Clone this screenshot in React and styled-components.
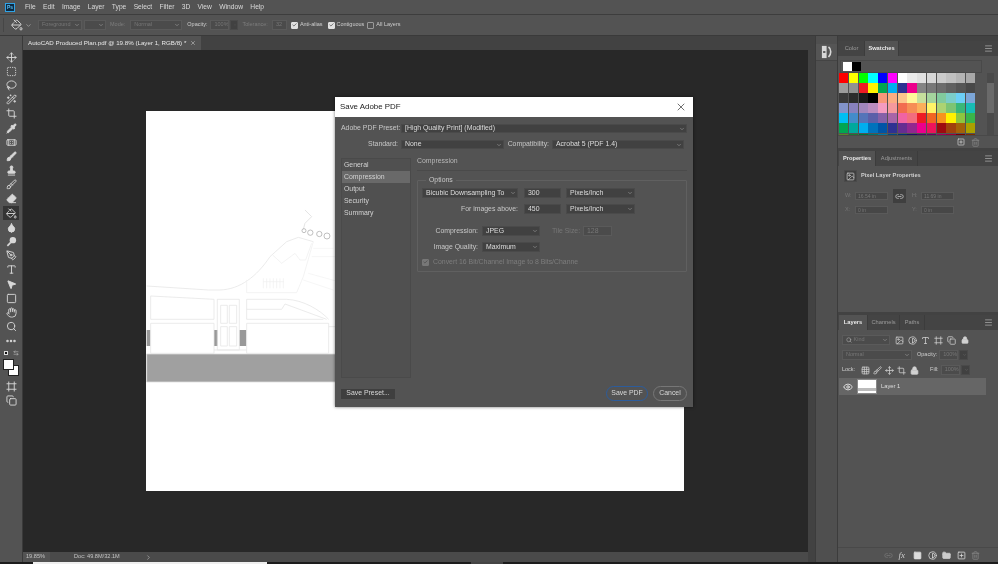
import React from 'react';
import styled, { createGlobalStyle } from 'styled-components';
import {
  Move, SquareDashed, Lasso, WandSparkles, Crop, Pipette, Bandage, Brush, Stamp, Eraser, PaintBucket,
  Droplet, PenTool, Type, MousePointer2, Square, Hand, Search, Ellipsis, Image, Lock,
  Link2, Trash2, FolderClosed, SquarePlus, Eye, Contrast, Grid3x3, Menu, ChevronDown, ChevronRight, X, Check, Frame, Copy, ArrowLeftRight,
} from 'lucide-react';

const Global = createGlobalStyle`
  html, body { margin: 0; padding: 0; background: #424242; overflow: hidden; }
  * { box-sizing: border-box; }
  #root { width: 998px; height: 564px; }
`;

const Page = styled.div`
  width: 998px; height: 564px; display: flex; flex-direction: column; background: #424242;
  font-family: "Liberation Sans", Arial, sans-serif; font-size: 6.9px; color: #cfcfcf; line-height: 1; overflow: hidden;
  filter: blur(0.3px);
`;
const MenuBar = styled.div`
  height: 15px; flex: none; background: #535353; display: flex; align-items: center; padding-left: 5px;
  border-bottom: 1px solid #3d3d3d;
`;
const Logo = styled.div`
  width: 10px; height: 9px; background: #0d2a42; border: 1px solid #2fa3e6; color: #5cc0f5; font-size: 5px; font-weight: 700;
  display: flex; align-items: center; justify-content: center; margin-right: 10px;
`;
const MenuItem = styled.span`
  color: #dadada; font-size: 6.7px; margin-right: 7.3px;
`;
const OptionsBar = styled.div`
  height: 21px; flex: none; background: #535353; display: flex; align-items: center; padding-left: 3px;
  border-bottom: 1px solid #3a3a3a; font-size: 5.5px;
`;
const Grip = styled.div`width: 1px; height: 14px; background: #464646; margin-right: 7px;`;
const Spaced = styled.div`
  display: flex; align-items: center; flex: none; margin-left: ${p => p.$ml || 0}px;
  color: ${p => p.$muted ? '#7d7d7d' : '#cfcfcf'};
`;
const Field = styled.div`
  flex: none; width: ${p => p.$w}px; height: ${p => p.$h || 10}px; margin-left: ${p => p.$ml || 0}px;
  background: ${p => p.$dim ? '#4b4b4b' : '#414141'}; border: 1px solid ${p => p.$dim ? '#5a5a5a' : '#4a4a4a'};
  color: ${p => p.$dim ? '#777' : '#dedede'}; display: flex; align-items: center; justify-content: space-between; padding: 0 1px 0 3px;
  white-space: nowrap; overflow: hidden;
`;
const Tick = styled.div`
  width: 7px; height: 7px; flex: none; border-radius: 1px; margin-left: ${p => p.$ml || 0}px;
  background: ${p => p.$on ? '#e0e0e0' : 'transparent'}; border: 1px solid ${p => p.$on ? '#e0e0e0' : '#9a9a9a'};
  display: flex; align-items: center; justify-content: center;
  ${p => p.$dim && 'background:#777;border-color:#777;'}
`;
const Workspace = styled.div`flex: 1; min-height: 0; display: flex;`;
const Tools = styled.div`
  width: 23px; flex: none; background: #535353; border-right: 1px solid #3a3a3a; padding-top: 14px;
  display: flex; flex-direction: column; align-items: center; position: relative;
`;
const Tool = styled.div`
  width: 16px; height: 14.2px; flex: none; display: flex; align-items: center; justify-content: center; color: #d8d8d8;
  background: ${p => p.$active ? '#343434' : 'transparent'};
`;
const ColorPair = styled.div`
  width: 16px; height: 29px; flex: none; margin-top: 2px; position: relative;
`;
const Chip = styled.div`
  position: absolute; background: #fff; border: 1px solid #222; width: 11px; height: 11px;
  left: ${p => p.$x}px; top: ${p => p.$y}px;
`;
const MiniChip = styled.div`
  position: absolute; left: 1px; top: 1px; width: 4px; height: 4px; background: #111; border: 1px solid #ddd;
`;
const Swap = styled.div`position: absolute; left: 10px; top: 0; color: #ccc; display: flex;`;
const Centre = styled.div`flex: 1; min-width: 0; display: flex; flex-direction: column;`;
const TabBar = styled.div`height: 14px; flex: none; background: #424242; display: flex;`;
const DocTab = styled.div`
  width: 178px; background: #535353; display: flex; align-items: center; justify-content: space-between;
  padding: 0 5px; color: #e8e8e8; font-size: 6.2px; white-space: nowrap; font-weight: 400;
`;
const Canvas = styled.div`
  flex: 1; min-height: 0; background: #282828; position: relative; display: flex; align-items: center; justify-content: center;
`;
const Doc = styled.div`width: 538px; height: 380px; background: #fff; flex: none; margin-right: 2px;`;
const DocDrawing = styled.svg`display: block; width: 538px; height: 380px;`;
const Status = styled.div`
  height: 10px; flex: none; background: #4a4a4a; display: flex; align-items: center; color: #c4c4c4; font-size: 5.6px;
`;
const StatusCell = styled.div`
  height: 100%; width: ${p => p.$w}px; flex: none; display: flex; align-items: center; padding-left: ${p => p.$pl}px; background: ${p => p.$bg || 'transparent'};
`;
const Bottom = styled.div`height: 2px; flex: none; background: #1c1c1c; display: flex; padding-left: 33px;`;
const BottomPiece = styled.div`width: ${p => p.$w}px; margin-right: ${p => p.$mr || 0}px; background: ${p => p.$c};`;

const Gutter = styled.div`width: 7px; flex: none; background: #424242;`;
const IconStrip = styled.div`
  width: 23px; flex: none; background: #4f4f4f; border-left: 1px solid #3c3c3c; border-right: 1px solid #3c3c3c; padding-top: 8px;
`;
const StripBox = styled.div`
  height: 17px; background: #555; display: flex; align-items: center; justify-content: center; color: #d8d8d8; border-bottom: 1px solid #444;
`;
const Right = styled.div`
  width: 160px; flex: none; display: flex; flex-direction: column; padding-top: 5px; gap: 3px; background: #424242;
`;
const Panel = styled.div`
  height: ${p => p.$h ? `${p.$h}px` : 'auto'}; flex: ${p => p.$h ? 'none' : 1}; background: #535353; display: flex; flex-direction: column; min-height: 0;
`;
const Tabs = styled.div`height: 15px; flex: none; background: #444; display: flex; align-items: stretch; padding-left: 1px; position: relative;`;
const PanelTab = styled.div`
  width: ${p => p.$w}px; display: flex; align-items: center; justify-content: center; font-size: 5.7px;
  background: ${p => p.$on ? '#535353' : 'transparent'}; color: ${p => p.$on ? '#e8e8e8' : '#9c9c9c'}; font-weight: ${p => p.$on ? 700 : 400};
  border-right: 1px solid #3c3c3c;
`;
const PanelMenu = styled.div`position: absolute; right: 5px; top: 3px; color: #aaa; display: flex;`;
const SwatchHead = styled.div`
  height: 13px; margin: 4px 16px 0 2px; flex: none; border: 1px solid #494949; display: flex; align-items: center; padding-left: 2px;
`;
const Solid = styled.div`width: 9px; height: 9px; background: ${p => p.$c};`;
const SwatchWrap = styled.div`display: flex; padding-left: 1px; height: 62px; flex: none;`;
const SwatchGrid = styled.div`
  width: 137px; height: 62px; overflow: hidden; display: grid; grid-template-columns: repeat(14, 9.78px); grid-auto-rows: 10.1px; flex: none;
`;
const Swatch = styled.div`background: ${p => p.$c}; margin: 0 .5px .5px 0;`;
const Scroll = styled.div`
  width: 7px; margin-left: 11px; background: #4a4a4a; padding: 10px 0 0; flex: none;
`;
const Thumb = styled.div`height: 30px; background: #6a6a6a;`;
const PanelFoot = styled.div`
  height: 13px; flex: none; display: flex; align-items: center; justify-content: flex-end; gap: 6px; padding-right: 18px; color: #bdbdbd; border-top: 1px solid #494949;
`;
const PropHead = styled.div`display: flex; align-items: center; gap: 4px; padding: 4px 0 0 6px; color: #cfcfcf; font-weight: 700; font-size: 5.7px;`;
const PropIcon = styled.div`width: 13px; height: 12px; background: #3f3f3f; border: 1px solid #4a4a4a; display: flex; align-items: center; justify-content: center; color: #ccc;`;
const PropGrid = styled.div`
  display: grid; grid-template-columns: 10px 33px 5px 13px 6px 9px 33px; grid-auto-rows: 8px; row-gap: 6px; align-items: center; padding: 10px 0 0 7px; color: #777; font-size: 5.5px;
`;
const PropInput = styled.div`height: 8px; background: #474747; border: 1px solid #5a5a5a; padding-left: 2px; color: #777; display: flex; align-items: center; font-size: 5px;`;
const LinkBtn = styled.div`
  height: 14px; background: #3f3f3f; display: flex; align-items: center; justify-content: center; color: #c8c8c8;
`;
const Row = styled.div`
  display: flex; align-items: center; flex: none; height: ${p => p.$h || 10}px; margin-top: ${p => p.$mt || 0}px; padding-left: ${p => p.$pl || 0}px;
`;
const LayerControls = styled.div`font-size: 5.5px;`;
const IconSlot = styled.div`
  width: ${p => p.$w}px; flex: none; display: flex; justify-content: center; color: #d2d2d2;
`;
const LayerRow = styled.div`
  height: 17px; width: 147px; flex: none; background: #666; margin: 3px 0 0 1px; display: flex; align-items: center; padding-left: 4px; color: #dedede; font-size: 5.8px; position: relative;
`;
const LayerThumb = styled.div`
  width: 20px; height: 15px; background: #fff; margin-left: 4px; margin-right: 4px; border: 1px solid #888; display: flex; align-items: flex-end;
`;
const LayerBand = styled.div`height: 3px; width: 100%; background: #bbb; margin-bottom: 2px;`;
const Spacer = styled.div`flex: 1;`;
const LayerFoot = styled(PanelFoot)`height: 15px; gap: 5.5px; padding-right: 18px; color: #a8a8a8;`;
const Fx = styled.span`display: inline-block; width: 9px; font-style: italic; font-family: "Liberation Serif", serif; font-size: 9px; color: #ccc;`;

const Dialog = styled.div`
  position: absolute; left: 312px; top: 47px; width: 358px; height: 310px; background: #535353;
  display: flex; flex-direction: column; box-shadow: 0 0 3px rgba(0,0,0,.55); color: #c8c8c8;
`;
const TitleBar = styled.div`
  height: 20px; flex: none; background: #fff; color: #222; font-size: 7.9px; display: flex; align-items: center; justify-content: space-between; padding: 0 6px 0 5px;
`;
const DialogBody = styled.div`flex: 1; display: flex; flex-direction: column; padding: 7px 6px 5px;`;
const RightLabel = styled.div`
  flex: none; width: ${p => p.$w}px; margin-left: ${p => p.$ml || 0}px; text-align: right; white-space: nowrap; color: ${p => p.$dim ? '#777' : '#c8c8c8'}; margin-right: ${p => p.$mr ?? 3}px;
`;
const Main = styled.div`display: flex; gap: 6px; margin-top: 9px; height: 220px; flex: none;`;
const Sidebar = styled.div`width: 70px; flex: none; border: 1px solid #4a4a4a; background: #505050;`;
const SideItem = styled.div`
  height: 12px; display: flex; align-items: center; padding-left: 2px;
  background: ${p => p.$on ? '#696969' : 'transparent'}; color: #d2d2d2;
`;
const Content = styled.div`flex: 1; min-width: 0;`;
const SectionHead = styled.div`height: 13px; border-bottom: 1px solid #4a4a4a; color: #b8b8b8;`;
const Group = styled.div`
  position: relative; height: 92px; margin-top: 9px; border: 1px solid #606060; border-radius: 1px; padding: 7px 0 0 4px;
`;
const Legend = styled.div`
  position: absolute; left: 8px; top: -4px; background: #535353; padding: 0 3px; color: #c8c8c8;
`;
const Check2 = styled.div`display: flex; align-items: center; gap: 4px; color: #7d7d7d; margin-top: 6px; height: 8px;`;
const Footer = styled.div`flex: 1; display: flex; align-items: center; gap: 5px; padding: 6px 0 0 0;`;
const PresetBtn = styled.div`
  width: 54px; height: 10px; background: #3f3f3f; color: #d8d8d8; display: flex; align-items: center; justify-content: center; margin-right: auto; margin-top: 1px;
`;
const RoundBtn = styled.div`
  width: ${p => p.$w}px; height: 15px; border-radius: 8px; border: 1px solid ${p => p.$primary ? '#2c5c9c' : '#777'}; color: #d8d8d8;
  display: flex; align-items: center; justify-content: center;
`;
const Caret = () => <ChevronDown size={6} strokeWidth={2} color="#a8a8a8" />;
const Sel = ({ w, ml, dim, children }) => (
  <Field $w={w} $ml={ml} $dim={dim}><span>{children}</span><Caret /></Field>
);

const Dodge = ({ size }) => (
  <svg width={size} height={size} viewBox="0 0 12 12">
    <circle cx="7.5" cy="4.5" r="3.5" fill="currentColor" />
    <path d="M5.2 7L1.5 10.8" stroke="currentColor" strokeWidth="1.8" fill="none" />
  </svg>
);
const CloneIcon = () => (
  <svg width="12" height="14" viewBox="0 0 12 14" fill="none" stroke="currentColor" strokeWidth="1.2">
    <rect x="1.5" y="1.5" width="3.5" height="3" fill="currentColor" />
    <rect x="1.5" y="5.5" width="3.5" height="3" />
    <rect x="1.5" y="9.5" width="3.5" height="3" fill="currentColor" />
    <path d="M7.5 2C10.5 4 10.5 9 7.5 12" strokeWidth="1.6" />
  </svg>
);

const menus = ['File', 'Edit', 'Image', 'Layer', 'Type', 'Select', 'Filter', '3D', 'View', 'Window', 'Help'];
const toolIcons = [
  [Move], [SquareDashed], [Lasso], [WandSparkles], [Crop], [Pipette, 1], [Bandage], [Brush, 1], [Stamp, 1], [Brush], [Eraser, 1], [PaintBucket],
  [Droplet, 1], [Dodge], [PenTool], [Type], [MousePointer2, 1], [Square], [Hand], [Search], [Ellipsis],
];
const swatches = [
  '#ff0000','#ffff00','#00ff00','#00ffff','#0000ff','#ff00ff','#ffffff','#ebebeb','#e1e1e1','#d7d7d7','#cbcbcb','#c0c0c0','#b4b4b4','#a8a8a8',
  '#9c9c9c','#919191','#ed1c24','#fff200','#00a651','#00aeef','#2e3192','#ec008c','#848484','#787878','#6c6c6c','#606060','#555555','#484848',
  '#3a3a3a','#2c2c2c','#1a1a1a','#000000','#f7977a','#fbad82','#fdc68c','#fff799','#c6df9c','#a4d49d','#81ca9d','#7bcdc9','#6ccff7','#7ca6d8',
  '#8293ca','#8881be','#a286bd','#bc8cbf','#f49bc1','#f5999d','#f26c4f','#f68e55','#fbaf5a','#fff467','#acd372','#7dc473','#39b778','#17bcb4',
  '#00bff3','#438cca','#5574b9','#5c5fa9','#8560a8','#a864a8','#f063a4','#f26d7e','#ed1c24','#f26522','#f7941d','#fff200','#8dc63f','#39b54a',
  '#00a651','#00a99d','#00aeef','#0072bc','#0054a6','#2e3192','#662d91','#92278f','#ec008c','#ed145b','#9e0b0f','#a0410d','#a36209','#aba000',
  '#598527','#1a7b30','#007236','#00746b','#0076a3','#004b80','#003471','#1b1464','#440e62','#630460','#9e005d','#9e0039','#790000','#7a2e00',
];

const PlanDrawing = () => (
  <DocDrawing viewBox="0 0 538 380">
    <g transform="translate(-6 99) scale(.3333)" fill="none" stroke="#e6e6e6" strokeWidth="2.4">
      <path fill="#a0a0a0" stroke="#dcdcdc" d="M20 432H620V516H20z" />
      <path fill="#999" stroke="none" d="M20 360h11v48H20zM222 360h11v48h-11zM298 360h21v48h-21z" />
      <path d="M32 258L222 268V328H32z" />
      <path d="M32 340H222V430H32z" />
      <path d="M232 268H298V420H232z" />
      <path d="M242 286h20v54h-20zM268 286h22v54h-22zM242 350h20v58h-20zM268 350h22v58h-22z" />
      <path d="M222 420h98M320 340H566V430H320zM566 350h40" />
      <path d="M320 268V328H550M320 298H425L435 282L560 328" />
      <path d="M320 268H440C490 270 540 300 566 328" />
      <path d="M20 228L205 240H240C300 238 350 200 390 140L440 95L475 82L520 95" />
      <path stroke="#f0f0f0" d="M320 210V248H470L490 200L520 95M398 135L425 160L465 130L480 150H497L515 100" />
      <path stroke="#eee" d="M370 205v30M380 205v30M390 205v30M400 205v30M410 205v30M420 205v30M430 205v30M370 215h62" strokeWidth="2" />
      <path stroke="#ddd" d="M495 0L515 20L495 40L490 58" />
      <path stroke="#b0b0b0" d="M486 62a6 6 0 1 1 12 0a6 6 0 1 1-12 0M503 68a8 8 0 1 1 16 0a8 8 0 1 1-16 0M530 72a8 8 0 1 1 16 0a8 8 0 1 1-16 0M552 78a9 9 0 1 1 18 0a9 9 0 1 1-18 0" />
      <path stroke="#f4f4f4" d="M520 115h60M515 140h70M505 190l80 22M490 210l90 30" />
    </g>
  </DocDrawing>
);

export default function App() {
  return (
    <Page>
      <Global />
      <MenuBar>
        <Logo>Ps</Logo>
        {menus.map(m => <MenuItem key={m}>{m}</MenuItem>)}
      </MenuBar>
      <OptionsBar>
        <Grip />
        <PaintBucket size={12} color="#dcdcdc" strokeWidth={1.8} />
        <Spaced $ml={2}><ChevronDown size={7} color="#bbb" /></Spaced>
        <Sel w={44} ml={6} dim>Foreground</Sel>
        <Sel w={22} ml={2} dim />
        <Spaced $ml={4} $muted>Mode:</Spaced>
        <Sel w={52} ml={5} dim>Normal</Sel>
        <Spaced $ml={5}>Opacity:</Spaced>
        <Field $w={19} $ml={3} $dim>100%</Field>
        <Field $w={8} $ml={1}><Caret /></Field>
        <Spaced $ml={4} $muted>Tolerance:</Spaced>
        <Field $w={15} $ml={4} $dim>32</Field>
        <Tick $ml={4} $on><Check size={6} color="#333" strokeWidth={3} /></Tick>
        <Spaced $ml={2}>Anti-alias</Spaced>
        <Tick $ml={5} $on><Check size={6} color="#333" strokeWidth={3} /></Tick>
        <Spaced $ml={2}>Contiguous</Spaced>
        <Tick $ml={3} />
        <Spaced $ml={2}>All Layers</Spaced>
      </OptionsBar>
      <Workspace>
        <Tools>
          {toolIcons.map(([I, filled], i) => (
            <Tool key={i} $active={i === 11}>
              <I size={i === 20 ? 12 : 11} strokeWidth={i === 20 ? 3 : 2} fill={filled ? 'currentColor' : 'none'} />
            </Tool>
          ))}
          <ColorPair>
            <MiniChip />
            <Swap><ArrowLeftRight size={6} strokeWidth={2} /></Swap>
            <Chip $x={5} $y={15} />
            <Chip $x={0} $y={9} />
          </ColorPair>
          <Tool><Frame size={11} strokeWidth={2} /></Tool>
          <Tool><Copy size={11} strokeWidth={2} /></Tool>
        </Tools>
        <Centre>
          <TabBar>
            <DocTab>
              <span>AutoCAD Produced Plan.pdf @ 19.8% (Layer 1, RGB/8) *</span>
              <X size={6} color="#bbb" strokeWidth={2.5} />
            </DocTab>
          </TabBar>
          <Canvas>
            <Doc><PlanDrawing /></Doc>
            <Dialog>
              <TitleBar>
                <span>Save Adobe PDF</span>
                <X size={12} color="#222" strokeWidth={1.3} />
              </TitleBar>
              <DialogBody>
                <Row $h={9}>
                  <RightLabel $w={57}>Adobe PDF Preset:</RightLabel>
                  <Field $w={286} $h={9}><span>[High Quality Print] (Modified)</span><Caret /></Field>
                </Row>
                <Row $h={9} $mt={7}>
                  <RightLabel $w={57}>Standard:</RightLabel>
                  <Field $w={103} $h={9}><span>None</span><Caret /></Field>
                  <RightLabel $w={45}>Compatibility:</RightLabel>
                  <Field $w={132} $h={9}><span>Acrobat 5 (PDF 1.4)</span><Caret /></Field>
                </Row>
                <Main>
                  <Sidebar>
                    <SideItem>General</SideItem>
                    <SideItem $on>Compression</SideItem>
                    <SideItem>Output</SideItem>
                    <SideItem>Security</SideItem>
                    <SideItem>Summary</SideItem>
                  </Sidebar>
                  <Content>
                    <SectionHead>Compression</SectionHead>
                    <Group>
                      <Legend>Options</Legend>
                      <Row>
                        <Sel w={96}>Bicubic Downsampling To</Sel>
                        <Field $w={37} $ml={6}>300</Field>
                        <Sel w={69} ml={5}>Pixels/Inch</Sel>
                      </Row>
                      <Row $mt={6}>
                        <RightLabel $w={96} $mr={0}>For images above:</RightLabel>
                        <Field $w={37} $ml={6}>450</Field>
                        <Sel w={69} ml={5}>Pixels/Inch</Sel>
                      </Row>
                      <Row $mt={12}>
                        <RightLabel $w={56} $mr={4}>Compression:</RightLabel>
                        <Sel w={58}>JPEG</Sel>
                        <RightLabel $w={28} $ml={12} $dim>Tile Size:</RightLabel>
                        <Field $w={29} $dim>128</Field>
                      </Row>
                      <Row $mt={6}>
                        <RightLabel $w={56} $mr={4}>Image Quality:</RightLabel>
                        <Sel w={58}>Maximum</Sel>
                      </Row>
                      <Check2>
                        <Tick $dim><Check size={6} color="#444" strokeWidth={3} /></Tick>
                        <span>Convert 16 Bit/Channel Image to 8 Bits/Channe</span>
                      </Check2>
                    </Group>
                  </Content>
                </Main>
                <Footer>
                  <PresetBtn>Save Preset...</PresetBtn>
                  <RoundBtn $w={42} $primary>Save PDF</RoundBtn>
                  <RoundBtn $w={34}>Cancel</RoundBtn>
                </Footer>
              </DialogBody>
            </Dialog>
          </Canvas>
          <Status>
            <StatusCell $w={3} $pl={0} $bg="#535353" />
            <StatusCell $w={24} $pl={0} $bg="#535353">19.85%</StatusCell>
            <StatusCell $w={95} $pl={24}>Doc: 49.8M/32.1M</StatusCell>
            <ChevronRight size={7} color="#bbb" />
          </Status>
        </Centre>
        <Gutter />
        <IconStrip>
          <StripBox><CloneIcon /></StripBox>
        </IconStrip>
        <Right>
          <Panel $h={107}>
            <Tabs>
              <PanelTab $w={26}>Color</PanelTab>
              <PanelTab $w={34} $on>Swatches</PanelTab>
              <PanelMenu><Menu size={9} /></PanelMenu>
            </Tabs>
            <SwatchHead><Solid $c="#fff" /><Solid $c="#000" /></SwatchHead>
            <SwatchWrap>
              <SwatchGrid>
                {swatches.map((c, i) => <Swatch key={i} $c={c} />)}
              </SwatchGrid>
              <Scroll><Thumb /></Scroll>
            </SwatchWrap>
            <PanelFoot>
              <SquarePlus size={8} color="#ddd" />
              <Trash2 size={9} color="#888" />
            </PanelFoot>
          </Panel>
          <Panel $h={161}>
            <Tabs>
              <PanelTab $w={37} $on>Properties</PanelTab>
              <PanelTab $w={42}>Adjustments</PanelTab>
              <PanelMenu><Menu size={9} /></PanelMenu>
            </Tabs>
            <PropHead><PropIcon><Image size={9} /></PropIcon>Pixel Layer Properties</PropHead>
            <PropGrid>
              <span>W:</span><PropInput>16.54 in</PropInput><span /><LinkBtn><Link2 size={9} /></LinkBtn><span /><span>H:</span><PropInput>11.69 in</PropInput>
              <span>X:</span><PropInput>0 in</PropInput><span /><span /><span /><span>Y:</span><PropInput>0 in</PropInput>
            </PropGrid>
          </Panel>
          <Panel>
            <Tabs>
              <PanelTab $w={29} $on>Layers</PanelTab>
              <PanelTab $w={32}>Channels</PanelTab>
              <PanelTab $w={25}>Paths</PanelTab>
              <PanelMenu><Menu size={9} /></PanelMenu>
            </Tabs>
            <LayerControls>
              <Row $mt={5} $pl={4}>
                <Field $w={48} $dim><Search size={6} color="#bbb" /><span>&nbsp;Kind</span><Spacer /><Caret /></Field>
                <Spaced $ml={2.5} />
                <IconSlot $w={13.2}><Image size={9} /></IconSlot>
                <IconSlot $w={13.2}><Contrast size={9} /></IconSlot>
                <IconSlot $w={13.2}><Type size={9} /></IconSlot>
                <IconSlot $w={13.2}><Frame size={9} /></IconSlot>
                <IconSlot $w={13.2}><Copy size={9} /></IconSlot>
                <IconSlot $w={13.2}><Lock size={8} fill="currentColor" /></IconSlot>
              </Row>
              <Row $mt={5} $pl={4}>
                <Sel w={70} dim>Normal</Sel>
                <Spaced $ml={5}>Opacity:</Spaced>
                <Field $w={19} $ml={2} $dim>100%</Field>
                <Field $w={9} $ml={1}><Caret /></Field>
              </Row>
              <Row $mt={5} $pl={4}>
                <Spaced>Lock:</Spaced>
                <Spaced $ml={4} />
                <IconSlot $w={12.2}><Grid3x3 size={9} /></IconSlot>
                <IconSlot $w={12.2}><Brush size={9} /></IconSlot>
                <IconSlot $w={12.2}><Move size={9} /></IconSlot>
                <IconSlot $w={12.2}><Crop size={9} /></IconSlot>
                <IconSlot $w={12.2}><Lock size={9} fill="currentColor" /></IconSlot>
                <Spaced $ml={10}>Fill:</Spaced>
                <Field $w={19} $ml={2} $dim>100%</Field>
                <Field $w={9} $ml={1}><Caret /></Field>
              </Row>
            </LayerControls>
            <LayerRow>
              <Eye size={10} color="#eee" />
              <LayerThumb><LayerBand /></LayerThumb>
              Layer 1
            </LayerRow>
            <Spacer />
            <LayerFoot>
              <Link2 size={9} color="#777" />
              <Fx>fx</Fx>
              <Square size={9} fill="#ddd" color="#ddd" />
              <Contrast size={9} color="#ddd" />
              <FolderClosed size={9} fill="#ccc" color="#ccc" />
              <SquarePlus size={9} color="#ddd" />
              <Trash2 size={9} color="#888" />
            </LayerFoot>
          </Panel>
        </Right>
      </Workspace>
      <Bottom>
        <BottomPiece $w={234} $mr={204} $c="#eee" />
        <BottomPiece $w={32} $c="#444" />
      </Bottom>
    </Page>
  );
}
